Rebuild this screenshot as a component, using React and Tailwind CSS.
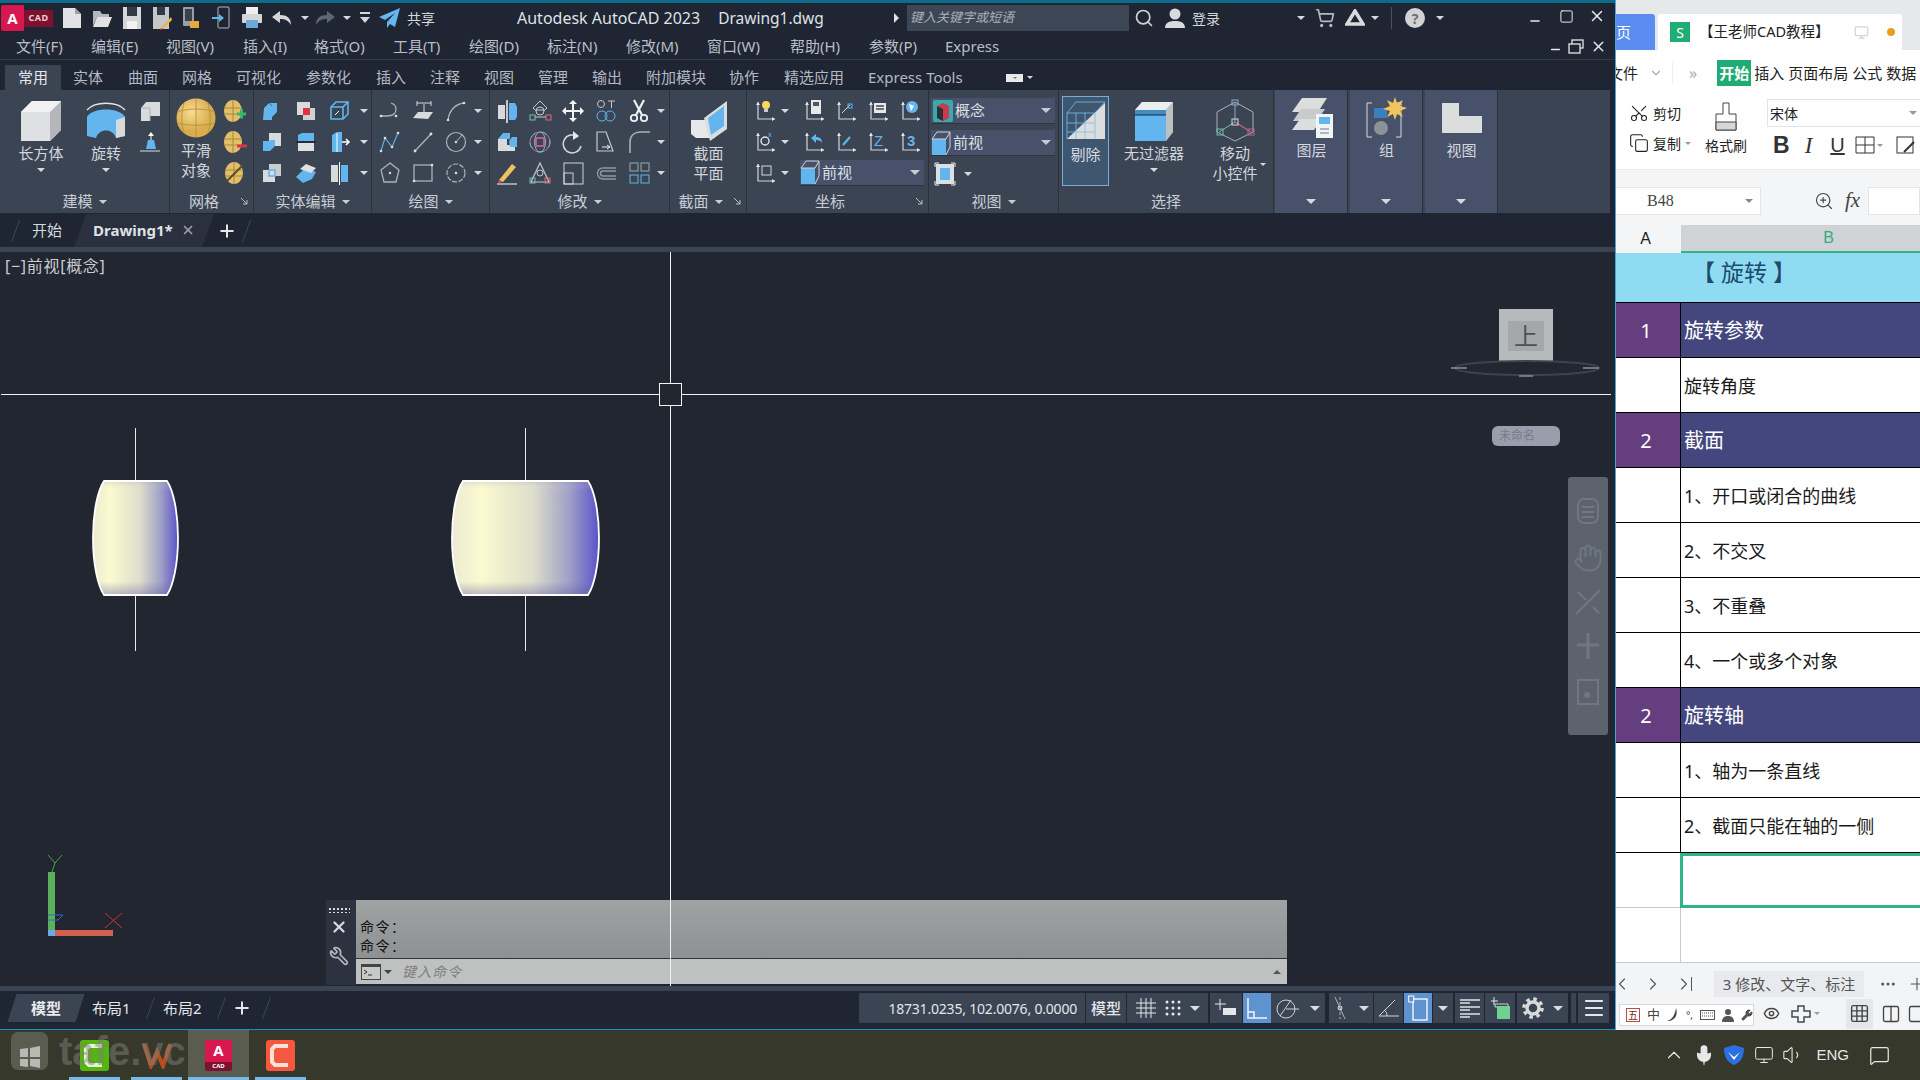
import React from "react";
import {
  X, Minus, Square, Search, ShoppingCart, Scissors, Copy, Wrench, Hand, Menu,
  ChevronLeft, ChevronRight, ChevronDown, ChevronUp, Plus, Mic, Volume1, MessageSquare, Monitor,
  ZoomIn, MoreHorizontal, Grid3x3, Columns2, Eye,
} from "lucide-react";

const L = "#d9dadb", B = "#62b5ee";

const Sv = ({ w = 24, h = 24, children, className = "" }) => (
  <svg width={w} height={h} viewBox={`0 0 ${w} ${h}`} className={"block shrink-0 " + className}>{children}</svg>
);
const Caret = ({ c = "#d5d8dc", s = 4 }) => (
  <svg width={s * 2} height={s} viewBox="0 0 8 4" className="block shrink-0"><path d="M0 0h8L4 4z" fill={c} /></svg>
);
const AxisBase = ({ children }) => (
  <Sv>
    <path d="M5 3v17h17" stroke="#cfd4da" strokeWidth="1.2" fill="none" />
    <path d="M3 6l2-3 2 3zM19 18l3 2-3 2z" fill="#e5e7ea" />
    {children}
  </Sv>
);

const icons = {
  uni: <Sv><path d="M4 9l5-5h8v9l-5 5v3H3z" fill={B} /><path d="M9 4l3 3" stroke="#2d6d9c" /></Sv>,
  sub: <Sv><rect x="3" y="3" width="13" height="13" fill={L} /><rect x="9" y="9" width="12" height="12" fill="#cfd0d2" /><rect x="9" y="9" width="7" height="7" fill="#d9363e" /></Sv>,
  press: <Sv><path d="M3 8l5-5h12v12l-5 5H3z" fill="none" stroke={B} strokeWidth="1.6" /><path d="M3 8h12v12M15 8l5-5" fill="none" stroke={B} strokeWidth="1.6" /><path d="M7 16l4-4" stroke="#fff" /></Sv>,
  inter: <Sv><rect x="9" y="3" width="12" height="13" fill={L} /><path d="M3 11h7v-1h5v6l-5 5H3z" fill={B} /></Sv>,
  slice: <Sv><path d="M4 5l4-2h12v8H4z" fill={B} /><path d="M4 13h16v8H4z" fill="#dfe0e1" /><path d="M2 12h20" stroke="#1f2532" strokeWidth="1.4" /></Sv>,
  thick: <Sv><path d="M4 5l5-3h5v20H4z" fill={B} /><path d="M9 3v19" stroke="#fff" /><path d="M14 12h7m-3-3l3 3-3 3" stroke="#fff" strokeWidth="1.6" fill="none" /></Sv>,
  sub2: <Sv><rect x="9" y="3" width="12" height="12" fill="#c9cbcd" /><rect x="3" y="9" width="12" height="12" fill={L} /><rect x="9" y="9" width="6" height="6" fill="none" stroke={B} strokeWidth="1.6" /></Sv>,
  fillet: <Sv><path d="M2 16l9-9 11 4-4 7-9 4z" fill={B} /><path d="M6 8l6-5 10 4-5 5z" fill="#dfe0e1" /></Sv>,
  sep: <Sv><rect x="3" y="4" width="7" height="17" fill={L} /><rect x="13" y="4" width="7" height="17" fill={B} /><path d="M11.5 1v23" stroke="#fff" /></Sv>,
  poly: <Sv><path d="M3 17h6c6 0 9-2 9-7 0-3-2-5-5-6" fill="none" stroke="#aab2bb" strokeWidth="1.3" /><circle cx="3" cy="17" r="1.3" fill="#ddd" /><circle cx="18" cy="17" r="1.3" fill="#ddd" /></Sv>,
  dim: <Sv><path d="M2 19l5-6h15l-5 7z" fill={L} /><path d="M6 4h14M6 2v5M20 2v5M13 5v10" stroke="#d4d8dc" fill="none" /></Sv>,
  arc: <Sv><path d="M4 21C5 12 11 5 20 4" fill="none" stroke="#aab2bb" strokeWidth="1.3" /><circle cx="4" cy="21" r="1.3" fill="#ddd" /><circle cx="20" cy="4" r="1.3" fill="#ddd" /></Sv>,
  pl: <Sv><path d="M3 21L7 8l7 9 6-14" fill="none" stroke={B} strokeWidth="1.1" /><circle cx="3" cy="21" r="1.3" fill="#ddd" /><circle cx="7" cy="8" r="1.3" fill="#ddd" /><circle cx="14" cy="17" r="1.3" fill="#ddd" /><circle cx="20" cy="3" r="1.3" fill="#ddd" /></Sv>,
  line: <Sv><path d="M4 21L20 4" stroke="#aab2bb" strokeWidth="1.3" /><circle cx="4" cy="21" r="1.4" fill="#ddd" /><circle cx="20" cy="4" r="1.4" fill="#ddd" /></Sv>,
  cir: <Sv><circle cx="12" cy="12" r="9.5" fill="none" stroke="#aab2bb" strokeWidth="1.2" /><circle cx="12" cy="12" r="1.3" fill="#ddd" /><path d="M12 12l6-7" stroke="#aab2bb" /></Sv>,
  pent: <Sv><path d="M12 2l9 7-3 12H6L3 9z" fill="none" stroke="#aab2bb" strokeWidth="1.3" /><circle cx="12" cy="12" r="1.2" fill="#ddd" /></Sv>,
  rect: <Sv><rect x="3" y="4" width="18" height="16" fill="none" stroke="#aab2bb" strokeWidth="1.3" /><circle cx="3" cy="20" r="1.3" fill="#ddd" /><circle cx="21" cy="4" r="1.3" fill="#ddd" /></Sv>,
  ell: <Sv><circle cx="12" cy="12" r="9" fill="none" stroke="#aab2bb" strokeWidth="1.2" strokeDasharray="5 1.5" /><circle cx="12" cy="12" r="1.3" fill="#ddd" /></Sv>,
  mirror: <Sv><path d="M3 6h7v14H3z" fill={L} /><path d="M14 4h6l2 4v10l-2 3h-6z" fill={B} /><path d="M12 1v23" stroke="#fff" strokeWidth="1.4" /></Sv>,
  net: <Sv><path d="M12 2l7 7-2 2H7L5 9z" fill="none" stroke="#c2c8ce" /><circle cx="12" cy="12" r="4" fill="none" stroke="#c2c8ce" /><rect x="2" y="16" width="5" height="5" fill="none" stroke="#6fc2a8" /><rect x="18" y="16" width="5" height="5" fill="none" stroke="#e26a7c" /><path d="M7 18h11" stroke="#c2c8ce" /></Sv>,
  move: <Sv><path d="M12 1l4 4h-3v6h6V8l4 4-4 4v-3h-6v6h3l-4 4-4-4h3v-6H5v3l-4-4 4-4v3h6V5H8z" fill="#f4f5f6" /></Sv>,
  copy: <Sv><circle cx="7" cy="5" r="3.5" fill="none" stroke="#c2c8ce" /><path d="M14 2h7M17.5 2v7" stroke="#c2c8ce" /><circle cx="8" cy="17" r="5" fill="none" stroke={B} /><circle cx="16" cy="17" r="5" fill="none" stroke={B} /></Sv>,
  cut: <Sv><path d="M7 1l8 15M17 1L9 16" stroke="#eef0f1" strokeWidth="2.2" /><circle cx="7" cy="19" r="3.2" fill="none" stroke="#eef0f1" strokeWidth="1.8" /><circle cx="17" cy="19" r="3.2" fill="none" stroke="#eef0f1" strokeWidth="1.8" /></Sv>,
  fillr: <Sv><path d="M3 9h9v6h8v6H3z" fill={L} /><path d="M3 9l5-6h7v6zM14 11l3-4h5v10h-7z" fill={B} /></Sv>,
  rot3d: <Sv><circle cx="12" cy="12" r="10" fill="none" stroke="#b977a8" /><circle cx="12" cy="12" r="10" fill="none" stroke="#6fc2a8" strokeDasharray="6 6" /><ellipse cx="12" cy="12" rx="5.5" ry="10" fill="none" stroke="#8fa7c9" /><rect x="8" y="8" width="8" height="8" fill="none" stroke="#d36aa0" strokeWidth="1.5" /></Sv>,
  rot: <Sv><path d="M17 7A9 9 0 1 0 20 16" fill="none" stroke="#d6d9dc" strokeWidth="1.5" /><path d="M12 1l6 5-6 4z" fill="#e5e7ea" /></Sv>,
  scale: <Sv><path d="M3 21V2h9l7 19z" fill="none" stroke="#c2c8ce" strokeWidth="1.2" /><path d="M8 17h8m-3-2l3 2-3 2" stroke="#eee" fill="none" /></Sv>,
  fil: <Sv><path d="M3 23V12C3 6 7 2 14 2h9" fill="none" stroke="#aab2bb" strokeWidth="1.6" /></Sv>,
  erase: <Sv><path d="M4 19L17 3l4 3L8 21z" fill="#ecc35f" /><path d="M4 19l4 2-5 1z" fill="#e4484e" /><path d="M2 23h20" stroke="#fff" /></Sv>,
  stretch: <Sv><path d="M12 2L21 21H3z" fill="none" stroke="#c2c8ce" strokeWidth="1.2" /><circle cx="12" cy="12" r="3" fill="none" stroke="#c2c8ce" /><rect x="2" y="17" width="5" height="5" fill="none" stroke="#6fc2a8" /><rect x="17" y="17" width="5" height="5" fill="none" stroke="#e26a7c" /></Sv>,
  sc2: <Sv><rect x="3" y="2" width="19" height="21" fill="none" stroke="#cdd2d7" /><rect x="3" y="12" width="9" height="11" fill="none" stroke="#cdd2d7" /></Sv>,
  off: <Sv><path d="M22 7H9a5 5 0 0 0 0 11h13M22 10H9a2.5 2.5 0 0 0 0 5h13" fill="none" stroke="#8f97a1" strokeWidth="1.4" /></Sv>,
  arr: <Sv><rect x="3" y="2" width="8" height="8" fill="none" stroke="#9aa" /><rect x="14" y="2" width="8" height="8" fill="none" stroke="#9aa" /><rect x="3" y="14" width="8" height="8" fill="none" stroke={B} /><rect x="14" y="14" width="8" height="8" fill="none" stroke={B} /></Sv>,
  ext: <Sv><path d="M3 9l5-6h14v14H12v5H3z" fill={L} /><path d="M3 9h9v13" fill="none" stroke="#aeb1b4" /></Sv>,
  push: <Sv><path d="M8 18l2-9h6l2 9z" fill={B} /><path d="M2 20h20" stroke="#e0e0e0" /><path d="M13 1l3 4h-6z" fill="#fff" /><path d="M13 4v5" stroke="#fff" /></Sv>,
  addF: <Sv><ellipse cx="10" cy="12" rx="9" ry="11" fill="#e3bf69" /><path d="M1 9h18M1 15h18M10 1v22" stroke="#a68a3e" /><path d="M14 15h9M18.500 10.500v9" stroke="#36b76c" strokeWidth="3" /></Sv>,
  remF: <Sv><ellipse cx="10" cy="12" rx="9" ry="11" fill="#e3bf69" /><path d="M1 9h18M1 15h18M10 1v22" stroke="#a68a3e" /><path d="M14 16h10" stroke="#d9363e" strokeWidth="3" /></Sv>,
  crF: <Sv><ellipse cx="11" cy="12" rx="9" ry="11" fill="#e3bf69" /><path d="M2 9h18M2 15h18M11 1v22" stroke="#a68a3e" /><path d="M4 20L20 4" stroke="#5b4b24" strokeWidth="2" /></Sv>,
  ucsL: <AxisBase><circle cx="13" cy="6" r="4" fill="#f6d75f" /><rect x="11" y="10" width="4" height="3" fill="#ccc" /></AxisBase>,
  ucsP: <AxisBase><rect x="9" y="1" width="10" height="14" fill="#e6e8ea" /><rect x="11" y="3" width="6" height="4" fill="#555" /></AxisBase>,
  ucsA: <AxisBase><path d="M8 14l8-8" stroke="#d7dade" /><rect x="14" y="5" width="4" height="4" fill="none" stroke={B} /></AxisBase>,
  ucsT: <AxisBase><rect x="8" y="4" width="12" height="10" fill="#e6e8ea" /><path d="M10 7h8M10 10h8" stroke="#445" strokeWidth="1.4" /></AxisBase>,
  ucsW: <AxisBase><circle cx="14" cy="8" r="6" fill={B} /><path d="M11 5l5 2-3 5z" fill="#fff" /></AxisBase>,
  ucsR: <AxisBase><circle cx="12" cy="11" r="4" fill="none" stroke="#e0e3e6" strokeWidth="1.4" /><text x="15" y="7" fontSize="7" fill={B}>x</text></AxisBase>,
  ucsB: <AxisBase><path d="M9 8l5-4v3c4 0 6 2 6 6-1-2-3-3-6-3v3z" fill={B} /></AxisBase>,
  ucsY: <AxisBase><path d="M9 15l7-8" stroke={B} strokeWidth="2" /></AxisBase>,
  ucsZ: <AxisBase><text x="8" y="16" fontSize="15" fontFamily="Liberation Sans" fill={B}>Z</text></AxisBase>,
  ucs3: <AxisBase><text x="9" y="16" fontSize="15" fontWeight="bold" fontFamily="Liberation Sans" fill={B}>3</text></AxisBase>,
  ucsN: <AxisBase><rect x="9" y="5" width="9" height="9" fill="none" stroke="#d5d9dd" /></AxisBase>,
};
const I = ({ n, w = 33 }) => <div style={{ width: w }} className="flex items-center justify-center shrink-0">{icons[n]}</div>;

const R = ({ children, className = "" }) => <div className={"flex items-center h-[31px] " + className}>{children}</div>;
const C = ({ w = 12 }) => <div style={{ width: w }} className="flex justify-center shrink-0"><Caret /></div>;

const Panel = ({ w, title, caret, launch, children, alt, shift }) => (
  <div style={{ width: w }} className={"shrink-0 flex flex-col border-r border-[#2a303c] " + (alt ? "bg-[#47516a]" : "")}>
    <div className="h-[100px] flex">{children}</div>
    <div className={"h-[23px] flex items-center justify-center gap-[6px] relative text-[15px] text-[#c9ced6] leading-none " + (shift ? "pr-[15px]" : "")}>
      {title}
      {caret && <Caret c="#c9ced6" />}
      {launch && <svg width="7" height="7" viewBox="0 0 7 7" className="absolute right-[5px] top-[8px]"><path d="M0 0l6 6M6 2v4H2" stroke="#b9bec6" fill="none" /></svg>}
    </div>
  </div>
);

const Big = ({ w, icon, lines, caret, className = "" }) => (
  <div style={{ width: w }} className={"shrink-0 flex flex-col items-center pt-[8px] text-[15px] leading-[20px] text-[#d3d7dd] " + className}>
    <div className="h-[45px] flex items-center">{icon}</div>
    {lines.map((l) => <div key={l} className="whitespace-nowrap">{l}</div>)}
    {caret && <div className="mt-[5px]"><Caret /></div>}
  </div>
);

const Dropdown = ({ w, icon, text, className = "" }) => (
  <div style={{ width: w }} className={"flex items-center bg-[#47516a] border-b border-[#2e3542] text-[15px] text-[#dde0e4] shrink-0 " + className}>
    {icon}<span className="ml-[2px]">{text}</span><span className="ml-auto mr-[4px]"><Caret s={5} c="#c8ccd2" /></span>
  </div>
);
const Cube = () => <Sv w={20} h={26}><rect x="1" y="9" width="14" height="16" fill={B} /><path d="M1 9l5-7h13v15l-4 8M1 9h14M15 9l4-7" fill="none" stroke="#cfd4da" /></Sv>;

const menu = [["文件(F)", 75], ["编辑(E)", 75], ["视图(V)", 77], ["插入(I)", 71], ["格式(O)", 79], ["工具(T)", 76], ["绘图(D)", 78], ["标注(N)", 79], ["修改(M)", 81], ["窗口(W)", 83], ["帮助(H)", 79], ["参数(P)", 76], ["Express", 70]];
const tabs = [["实体", 55], ["曲面", 54], ["网格", 54], ["可视化", 70], ["参数化", 70], ["插入", 54], ["注释", 54], ["视图", 54], ["管理", 54], ["输出", 54], ["附加模块", 83], ["协作", 55], ["精选应用", 84], ["Express Tools", 138]];

const Qat = ({ w, ml = 0, children }) => <div style={{ width: w, marginLeft: ml }} className="flex justify-center shrink-0">{children}</div>;

function TitleBar() {
  return (
    <div className="h-[30px] flex items-center relative text-[#d5d9de]">
      <div className="w-[23px] h-[26px] ml-[1px] bg-[#d8174f] rounded-l-[2px] flex items-center justify-center text-white font-bold text-[15px]">A</div>
      <div className="w-[29px] h-[17px] bg-[#7c1230] flex items-center justify-center text-[9px] font-bold text-[#f0cad4] tracking-[0.5px]">CAD</div>
      <Qat w={20} ml={9}><Sv w={20} h={22}><path d="M1 1h12l6 6v14H1z" fill="#e1e2e3" /><path d="M13 1v6h6z" fill="#9aa0a8" /></Sv></Qat>
      <Qat w={20} ml={10}><Sv w={20} h={20}><path d="M1 3h7l2 3h7v3H5L1 18z" fill="#b5b8bb" /><path d="M5 9h15l-4 10H1z" fill="#e1e2e3" /></Sv></Qat>
      <Qat w={20} ml={10}><Sv w={20} h={24}><path d="M1 1h18v22H1z" fill="#d5d6d8" /><rect x="5" y="1" width="10" height="9" fill="#323a48" /><rect x="5" y="15" width="10" height="8" fill="#f2f2f2" /></Sv></Qat>
      <Qat w={20} ml={10}><Sv w={20} h={24}><path d="M1 1h16v22H1z" fill="#c5c6c8" /><rect x="5" y="1" width="8" height="8" fill="#323a48" /><path d="M9 22l10-11 1 3-9 9z" fill="#ecb349" /><path d="M9 22l2 1-3 1z" fill="#d9363e" /></Sv></Qat>
      <Qat w={18} ml={10}><Sv w={18} h={24}><rect x="1" y="1" width="11" height="19" rx="1" fill="#9a9ea4" /><rect x="3" y="3" width="7" height="12" fill="#3a4250" /><path d="M8 15h9v7H8z" fill="#e7a93c" /></Sv></Qat>
      <Qat w={18} ml={12}><Sv w={18} h={24}><rect x="6" y="1" width="11" height="21" rx="1" fill="none" stroke="#b4b8bd" /><path d="M0 12h9" stroke={B} strokeWidth="2" /><path d="M7 8l5 4-5 4z" fill={B} /></Sv></Qat>
      <Qat w={20} ml={12}><Sv w={20} h={24}><rect x="4" y="1" width="12" height="7" fill="#eee" /><rect x="0" y="8" width="20" height="9" rx="1" fill="#d5d6d8" /><rect x="4" y="14" width="12" height="8" fill="#6da9d8" /></Sv></Qat>
      <Qat w={20} ml={10}><Sv w={20} h={16}><path d="M8 1L0 7l8 6V9c5 0 8 1 11 6 0-7-4-10-11-10z" fill="#d5d6d8" /></Sv></Qat>
      <Qat w={8} ml={9}><Caret /></Qat>
      <Qat w={20} ml={6}><Sv w={20} h={16}><path d="M12 1l8 6-8 6V9C7 9 4 10 1 15c0-7 4-10 11-10z" fill="#5e6672" /></Sv></Qat>
      <Qat w={8} ml={8}><Caret /></Qat>
      <Qat w={10} ml={9}><Sv w={10} h={12}><path d="M0 0h10v2H0z" fill="#d5d6d8" /><path d="M0 5h10L5 11z" fill="#d5d6d8" /></Sv></Qat>
      <Qat w={22} ml={9}><Sv w={22} h={20}><path d="M21 0L0 9l6 3 10-7-8 9v6l3-4 5 3z" fill="#65b6ee" /></Sv></Qat>
      <div className="ml-[6px] text-[14px] w-[110px] shrink-0">共享</div>
      <div className="whitespace-nowrap text-[#dfe2e6] w-[377px] shrink-0 flex items-baseline">
        <span className="text-[16px]">Autodesk AutoCAD 2023</span>
        <span className="ml-[18px] text-[15.5px]">Drawing1.dwg</span>
      </div>
      <div className="w-0 h-0 border-y-[5px] border-y-transparent border-l-[5px] border-l-[#e0e2e5] mr-[8px]" />
      <div className="w-[222px] h-[26px] bg-[#3d4654] flex items-center pl-[3px] text-[13px] italic text-[#a9afb8] shrink-0">键入关键字或短语</div>
      <Search size={20} className="ml-[5px] text-[#cfd3d8]" />
      <Sv w={22} h={20} className="ml-[10px]"><circle cx="11" cy="6" r="5.500" fill="#d9dadb" /><path d="M1 20c0-6 5-7 10-7s10 1 10 7z" fill="#d9dadb" /></Sv>
      <div className="ml-[6px] text-[14px] w-[30px]">登录</div>
      <div className="ml-[75px]"><Caret /></div>
      <ShoppingCart size={20} className="ml-[10px] text-[#b5b9be]" />
      <Sv w={20} h={18} className="ml-[10px]"><path d="M10 2L2 15h16z" fill="none" stroke="#d9dadb" strokeWidth="3.500" /></Sv>
      <div className="ml-[6px]"><Caret /></div>
      <div className="ml-[12px] w-px h-[22px] bg-[#4a5261]" />
      <div className="ml-[13px] w-[20px] h-[20px] rounded-full bg-[#d0d2d4] flex items-center justify-center text-[#6b7078] text-[14px] font-bold">?</div>
      <div className="ml-[11px]"><Caret /></div>
      <Minus size={14} strokeWidth={2.5} className="ml-[84px] mt-[6px] text-[#e8e9eb]" />
      <Square size={15} strokeWidth={1.6} className="ml-[17px] -mt-[4px] text-[#e8e9eb]" />
      <X size={18} strokeWidth={2} className="ml-[14px] -mt-[4px] text-[#e8e9eb]" />
    </div>
  );
}

function MenuBar() {
  return (
    <div className="h-[27px] flex items-center pl-[16px] border-b border-[#343b48] relative text-[15px] text-[#b9bfc8]">
      {menu.map(([t, w]) => <div key={t} style={{ width: w }} className="shrink-0 whitespace-nowrap">{t}</div>)}
      <div className="ml-auto mr-[8px] flex items-center gap-[6px] text-[#e8e9eb]">
        <Minus size={13} strokeWidth={3} className="mt-[6px]" />
        <Sv w={16} h={15}><rect x="4" y="1" width="11" height="8" fill="none" stroke="#e8e9eb" strokeWidth="1.300" /><rect x="1" y="5" width="11" height="9" fill="#1f2532" stroke="#e8e9eb" strokeWidth="1.300" /></Sv>
        <X size={17} strokeWidth={2} />
      </div>
    </div>
  );
}

function RibbonTabs() {
  return (
    <div className="h-[30px] flex items-end pl-[5px] text-[15px] text-[#b4bac4]">
      <div className="w-[56px] h-[25px] bg-[#3b4453] text-[#e6e9ec] flex items-center justify-center shrink-0">常用</div>
      <div className="w-[12px] shrink-0" />
      {tabs.map(([t, w]) => <div key={t} style={{ width: w }} className="h-[25px] flex items-center shrink-0 whitespace-nowrap">{t}</div>)}
      <div className="h-[25px] flex items-center gap-[4px]">
        <div className="w-[17px] h-[8px] bg-[#e9e9e9] flex items-center justify-center"><Caret c="#777" s={2} /></div>
        <Caret s={3} />
      </div>
    </div>
  );
}

const Tri = ({ names, pad = 0, step = 33, car = 12, gap = 0 }) => (
  <div className="flex flex-col pt-[5px]" style={{ marginLeft: pad }}>
    {names.map((r, i) => (
      <R key={i}>{r.map((n) => <I key={n} n={n} w={step} />)}{car > 0 && <div style={{ marginLeft: gap }}><C w={car} /></div>}</R>
    ))}
  </div>
);

function Ribbon() {
  return (
    <div className="h-[123px] pr-[5px] flex">
      <div className="flex-1 flex bg-[#3b4453]">
        <Panel w={170} title="建模" caret>
          <Big w={50} className="ml-[16px]" lines={["长方体"]} caret icon={<Sv w={42} h={42}><path d="M1 12L12 1h29v29L30 41H1z" fill="#dfe0e1" /><path d="M30 12L41 1v29L30 41z" fill="#b4b6b9" /><path d="M1 12L12 1h29L30 12z" fill="#f2f2f2" /></Sv>} />
          <Big w={50} className="ml-[15px]" lines={["旋转"]} caret icon={<Sv w={42} h={38}><path d="M2 15c5-10 33-10 38 0v19l-9 2c-3-10-17-10-20 0l-9-2z" fill={B} /><path d="M31 18l9-3v19l-9 2z" fill="#d8d9da" /><path d="M2 8C10-1 32-1 40 8" fill="none" stroke="#e3e4e5" strokeWidth="1.500" /></Sv>} />
          <div className="ml-[4px] flex flex-col pt-[9px] gap-[8px]">
            <I n="ext" w={30} />
            <I n="push" w={30} />
          </div>
        </Panel>
        <Panel w={84} title="网格" launch shift>
          <Big w={44} className="ml-[4px] !pt-[5px]" lines={["平滑", "对象"]} icon={
            <Sv w={40} h={40}><defs><radialGradient id="sp" cx="40%" cy="35%"><stop offset="0" stopColor="#f8dc91" /><stop offset="1" stopColor="#d9ac4c" /></radialGradient></defs><ellipse cx="20" cy="20" rx="19.500" ry="19.500" fill="url(#sp)" /><path d="M1 14c10-4 28-4 38 0M1 25c10 3 28 3 38 0M20 1v38M8 5c-3 10-3 22 0 30M32 5c3 10 3 22 0 30" stroke="#ad8b3f" fill="none" strokeWidth="0.800" /></Sv>} />
          <div className="ml-[2px]"><Tri names={[["addF"], ["remF"], ["crF"]]} step={30} car={0} /></div>
        </Panel>
        <Panel w={118} title="实体编辑" caret>
          <Tri names={[["uni", "sub", "press"], ["inter", "slice", "thick"], ["sub2", "fillet", "sep"]]} pad={1} step={34} car={11} gap={1} />
        </Panel>
        <Panel w={118} title="绘图" caret>
          <Tri names={[["poly", "dim", "arc"], ["pl", "line", "cir"], ["pent", "rect", "ell"]]} pad={1} step={33} car={12} />
        </Panel>
        <Panel w={180} title="修改" caret>
          <Tri names={[["mirror", "net", "move", "copy", "cut"], ["fillr", "rot3d", "rot", "scale", "fil"], ["erase", "stretch", "sc2", "off", "arr"]]} step={33} car={12} gap={0} />
        </Panel>
        <Panel w={77} title="截面" caret launch shift>
          <Big w={77} lines={["截面", "平面"]} icon={<Sv w={38} h={42}><path d="M1 20h24v18H6l-5-4z" fill="#e7e8e9" /><path d="M14 18L37 1v28L20 41z" fill="#dbdcdd" /><path d="M18 18L34 6v20L21 35z" fill={B} /></Sv>} />
        </Panel>
        <Panel w={182} title="坐标" launch shift>
          <div className="flex flex-col pt-[5px] pl-[5px]">
            <R><I n="ucsL" w={26} /><C w={14} /><div className="w-[6px]" /><I n="ucsP" w={32} /><I n="ucsA" w={32} /><I n="ucsT" w={32} /><I n="ucsW" w={32} /></R>
            <R><I n="ucsR" w={26} /><C w={14} /><div className="w-[6px]" /><I n="ucsB" w={32} /><I n="ucsY" w={32} /><I n="ucsZ" w={32} /><I n="ucs3" w={32} /></R>
            <R><I n="ucsN" w={26} /><C w={14} /><Dropdown w={124} className="ml-[8px] h-[26px]" icon={<Cube />} text="前视" /></R>
          </div>
        </Panel>
        <Panel w={130} title="视图" caret>
          <div className="flex flex-col pt-[8px] pl-[2px]">
            <Dropdown w={124} className="h-[26px] mb-[6px]" text="概念" icon={<Sv w={20} h={22} className="ml-[2px]"><rect width="20" height="22" rx="2" fill="#39a9a9" /><path d="M4 6l6-3 6 3v12l-6 3-6-3z" fill="#c43c4e" /><path d="M4 6l6 3v12l-6-3z" fill="#2b2f38" /></Sv>} />
            <Dropdown w={124} className="h-[26px]" text="前视" icon={<Cube />} />
            <div className="flex items-center mt-[5px] h-[26px]">
              <Sv w={22} h={24} className="ml-[3px]"><rect x="2" y="2" width="18" height="20" fill="#dcdfe2" /><rect x="6" y="6" width="10" height="12" fill={B} /><path d="M1 5V1h4M17 1h4v4M1 19v4h4M17 23h4v-4" stroke="#eee" fill="none" /></Sv>
              <div className="ml-[8px]"><Caret /></div>
            </div>
          </div>
        </Panel>
        <Panel w={215} title="选择">
          <div className="ml-[3px] mt-[6px] w-[47px] h-[90px] mb-[-1px] bg-[#3f5670] border border-[#74add6] flex flex-col items-center pt-[2px] text-[15px] text-[#d8dce1] shrink-0">
            <Sv w={40} h={42}><path d="M1 40l38-36v36z" fill="#dcdddd" /><path d="M1 14L10 3h29M1 14h28v26M29 14L39 3M1 14v26M10 14v26M19 14v26M1 24h28M1 33h28" stroke="#79c0e8" fill="none" strokeWidth="0.800" /></Sv>
            <div className="mt-[2px]">剔除</div>
          </div>
          <Big w={70} className="ml-[10px]" lines={["无过滤器"]} caret icon={<Sv w={40} h={42}><path d="M1 10L8 2h31v30l-7 9H1z" fill={B} /><path d="M1 10L8 2h31l-7 8z" fill="#eceded" /><path d="M32 10l7-8v30l-7 9z" fill="#bdbfc1" /><path d="M1 10h31v5H1z" fill="#3e8dc6" /><path d="M1 15h31" stroke="#1f2532" /></Sv>} />
          <div className="relative">
            <Big w={70} className="ml-[11px]" lines={["移动", "小控件"]} icon={<Sv w={40} h={44}><path d="M20 3L38 13v20L20 42 2 33V13z" fill="none" stroke="#aab0b8" /><path d="M20 3v20" stroke="#8fa7c9" /><path d="M20 23L4 33" stroke="#6fc2a8" /><path d="M20 23l16 10" stroke="#c26488" strokeWidth="1.400" /><rect x="17" y="20" width="6" height="6" fill="none" stroke="#d5d9dd" /><rect x="17" y="1" width="6" height="5" fill="none" stroke="#8fa7c9" /><rect x="2" y="30" width="6" height="6" fill="none" stroke="#6fc2a8" /><rect x="33" y="30" width="6" height="6" fill="none" stroke="#c26488" /></Sv>} />
            <div className="absolute right-[4px] top-[73px]"><Caret s={3} /></div>
          </div>
        </Panel>
        <div className="w-[1px] shrink-0" />
        <Panel w={73} alt title={<Caret s={5} />}>
          <Big w={73} className="!pt-[5px]" lines={["图层"]} icon={<Sv w={42} h={42}><path d="M11 1h25l-9 14H1z" fill="#dcdddd" /><path d="M10 12h24l-8 12H2z" fill="#c9cacc" /><path d="M9 22h22l-8 11H1z" fill="#dcdddd" /><rect x="25" y="17" width="17" height="24" fill="#f2f3f4" /><rect x="28" y="20" width="11" height="7" fill={B} /><path d="M29 32h9M29 36h9" stroke="#778" /></Sv>} />
        </Panel>
        <div className="w-[2px] shrink-0" />
        <Panel w={73} alt title={<Caret s={5} />}>
          <Big w={73} className="!pt-[5px]" lines={["组"]} icon={<Sv w={42} h={42}><path d="M6 6H1v34h5M30 6h5v34h-5" stroke="#d9dadb" fill="none" /><rect x="8" y="11" width="13" height="10" fill="#3c7fbe" /><circle cx="15" cy="31" r="7" fill="#8d9199" /><path d="M29 0l2 6 6-3-3 6 7 2-7 3 3 6-6-3-2 6-2-6-6 3 3-6-7-2 7-3-3-6 6 3z" fill="#f3c45a" /></Sv>} />
        </Panel>
        <div className="w-[2px] shrink-0" />
        <Panel w={73} alt title={<Caret s={5} />}>
          <Big w={73} className="!pt-[5px]" lines={["视图"]} icon={<Sv w={42} h={32}><path d="M1 1h17v13h23v17H1z" fill="#dcdddd" /></Sv>} />
        </Panel>
      </div>
    </div>
  );
}

const Skew = () => <div className="w-px h-[22px] bg-[#3e4656] -skew-x-[20deg] shrink-0" />;

function DocTabs() {
  return (
    <div className="h-[34px] flex items-center pl-[15px] pt-[1px] text-[#d5d9de]">
      <Skew />
      <div className="w-[64px] pl-[16px] text-[15px]">开始</div>
      <div className="h-[33px] w-[128px] bg-[#2a303d] -skew-x-[20deg] flex items-center justify-center">
        <div className="skew-x-[20deg] flex items-center gap-[8px] text-[15px] font-bold text-[#dfe2e6]">Drawing1*<X size={14} strokeWidth={3} className="text-[#9aa0a9]" /></div>
      </div>
      <Plus size={20} strokeWidth={2.4} className="ml-[9px] text-[#e8e9eb]" />
      <div className="ml-[9px]"><Skew /></div>
    </div>
  );
}

function Solid({ id, x, w }) {
  const y0 = 481, y1 = 595, r = x + w, inset = 11, m = (y0 + y1) / 2;
  const d = `M${x + inset} ${y0} H${r - inset} C${r - 5} ${y0 + 9} ${r} ${y0 + 30} ${r} ${m} C${r} ${y1 - 30} ${r - 5} ${y1 - 9} ${r - inset} ${y1} H${x + inset} C${x + 5} ${y1 - 9} ${x} ${y1 - 30} ${x} ${m} C${x} ${y0 + 30} ${x + 5} ${y0 + 9} ${x + inset} ${y0}Z`;
  return (
    <g>
      <defs>
        <linearGradient id={id + "h"} x1="0" x2="1" y1="0" y2="0">
          <stop offset="0" stopColor="#ecebd2" /><stop offset="0.2" stopColor="#fbfad0" /><stop offset="0.55" stopColor="#dedecb" />
          <stop offset="0.8" stopColor="#9f9fc6" /><stop offset="1" stopColor="#5a53c9" />
        </linearGradient>
        <linearGradient id={id + "v"} x1="0" x2="0" y1="0" y2="1">
          <stop offset="0" stopColor="#8e8ea0" stopOpacity="0.25" /><stop offset="0.08" stopColor="#fff" stopOpacity="0" /><stop offset="0.88" stopColor="#5a55a0" stopOpacity="0" /><stop offset="1" stopColor="#5a55a0" stopOpacity="0.4" />
        </linearGradient>
      </defs>
      <path d={d} fill={`url(#${id}h)`} />
      <path d={d} fill={`url(#${id}v)`} stroke="#fff" strokeWidth="1.800" />
    </g>
  );
}

function Canvas() {
  return (
    <div className="flex-1 relative bg-[#212631] overflow-hidden">
      <svg width="1615" height="733" viewBox="0 252 1615 733" className="absolute left-0 top-0">
        <path d="M135.500 428v53M135.500 595v56M525.500 428v53M525.500 595v56" stroke="#e8e9ea" strokeWidth="1" />
        <Solid id="a" x={93} w={85} />
        <Solid id="b" x={452} w={147} />
      </svg>

      <div className="absolute left-[5px] top-[5px] text-[16px] leading-[18px] tracking-[0.7px] text-[#c9ccd1]">[−]前视[概念]</div>

      <div className="absolute left-[1499px] top-[57px] w-[54px] h-[53px] bg-[#b7baba] flex items-center justify-center">
        <div className="w-[36px] h-[30px] bg-[#a5a8a9] flex items-center justify-center text-[24px] text-[#4c5158] leading-none">上</div>
      </div>
      <svg width="160" height="24" viewBox="0 0 160 24" className="absolute left-[1445px] top-[104px]">
        <ellipse cx="82" cy="12" rx="72" ry="7" fill="none" stroke="#3c434f" strokeWidth="2" />
        <path d="M6 12h16M138 12h16M74 20h14" stroke="#8b9097" strokeWidth="1.500" />
      </svg>
      <div className="absolute left-[1492px] top-[174px] w-[68px] h-[20px] rounded-[6px] bg-[#9a9eac] flex items-center pl-[7px] text-[12px] text-[#777b88]">未命名</div>

      <div className="absolute left-[1568px] top-[225px] w-[40px] h-[258px] rounded-[3px] bg-[#5c636c] flex flex-col items-center pt-[20px] text-[#6f767f] gap-[14px]">
        <Sv w={26} h={32}><rect x="3" y="2" width="20" height="24" rx="6" fill="none" stroke="#70777f" strokeWidth="2" /><path d="M7 10h12M7 15h12M7 20h12" stroke="#70777f" strokeWidth="2" /></Sv>
        <Hand size={30} strokeWidth={1.6} />
        <Sv w={30} h={30}><path d="M3 27L27 3M5 5l8 8M20 20l6 6" stroke="#70777f" strokeWidth="2" /></Sv>
        <Sv w={28} h={30}><path d="M14 2v26M3 14h22" stroke="#70777f" strokeWidth="3" /></Sv>
        <Sv w={26} h={34}><rect x="3" y="5" width="20" height="24" fill="none" stroke="#70777f" strokeWidth="2" /><circle cx="12" cy="20" r="3" fill="#70777f" /></Sv>
      </div>

      <svg width="100" height="90" viewBox="0 0 100 90" className="absolute left-[40px] top-[603px]">
        <path d="M8 17h7v64H8z" fill="#5cb05c" />
        <path d="M11 75h62v6H11z" fill="#d2604f" />
        <rect x="8" y="75" width="7" height="6" fill="#6aa8e8" />
        <path d="M8 0l7 8 7-8M15 8l-3 9" stroke="#4fa04f" fill="none" />
        <path d="M65 58l17 15M82 58L65 73" stroke="#c8383e" />
        <path d="M8 60h15l-5 5H8" stroke="#2a70c8" fill="none" />
      </svg>

      <div className="absolute left-[326px] top-[648px] w-[961px] h-[85px] flex">
        <div className="w-[30px] bg-[#2c3240] flex flex-col items-center pt-[7px] pr-[4px]">
          <div className="w-[22px] h-[6px] bg-[radial-gradient(#d8d9da_1px,transparent_1.3px)] bg-[length:4px_4px]" />
          <X size={18} strokeWidth={3} className="mt-[5px] text-[#d5d8dc]" />
          <Wrench size={20} className="mt-[10px] text-[#b5b9be] -scale-x-100" />
        </div>
        <div className="flex-1 flex flex-col">
          <div className="h-[59px] bg-gradient-to-b from-[#a0a3a3] to-[#8e9191] border-b border-[#333] flex flex-col justify-end pb-[3px] pl-[4px] text-[14px] tracking-[1.5px] leading-[19px] text-[#111]">
            <div>命令：</div>
            <div>命令：</div>
          </div>
          <div className="flex-1 bg-[#bfc1c0] flex items-center pl-[5px] text-[14px] italic text-[#7d7f80] mb-[1px]">
            <Sv w={20} h={16}><rect x="0.500" y="0.500" width="19" height="15" fill="#c8caca" stroke="#444" /><rect x="0" y="0" width="20" height="3" fill="#444" /><path d="M3 6l3 2-3 2M7 11h4" stroke="#333" fill="none" /></Sv>
            <div className="ml-[3px]"><Caret c="#444" /></div>
            <span className="ml-[10px] tracking-[1px]">键入命令</span>
            <span className="ml-auto mr-[6px] rotate-180"><Caret c="#555" /></span>
          </div>
        </div>
      </div>

      <div className="absolute left-[1px] top-[142px] w-[1610px] h-px bg-[#f2f3f4]" />
      <div className="absolute left-[670px] top-0 w-px h-full bg-[#f2f3f4]" />
      <div className="absolute left-[659px] top-[131px] w-[23px] h-[23px] border border-[#f2f3f4] bg-[#212631]" />
    </div>
  );
}

const SG = ({ w, children, active, className = "" }) => (
  <div style={{ width: w }} className={"h-[30px] shrink-0 flex items-center justify-center gap-[8px] " + (active ? "bg-[#5f93cf] " : "bg-[#3b4453] ") + className}>{children}</div>
);

function StatusBar() {
  return (
    <>
      <div className="h-[5px] bg-[#3b4453]" />
      <div className="h-[39px] flex items-start pt-[2px] text-[#e3e6ea] border-b border-[#1a8fc4]">
        <div className="flex items-center h-[30px] text-[15px] pl-[12px]">
          <div className="w-[68px] h-[28px] bg-[#3b4453] -skew-x-[18deg] flex items-center justify-center"><span className="skew-x-[18deg] font-bold text-[#e8eaed]">模型</span></div>
          <div className="w-[70px] pl-[12px]">布局1</div>
          <Skew />
          <div className="w-[70px] pl-[12px]">布局2</div>
          <Skew />
          <Plus size={20} strokeWidth={2.4} className="ml-[10px]" />
          <div className="ml-[14px]"><Skew /></div>
        </div>
        <div className="flex-1" />
        <div className="flex items-center gap-[1px] pr-[6px]">
          <SG w={226} className="!justify-end pr-[8px] text-[14px] tracking-[-0.2px] whitespace-nowrap">18731.0235, 102.0076, 0.0000</SG>
          <SG w={40} className="text-[15px] font-medium">模型</SG>
          <SG w={81}>
            <Sv w={20} h={20}><path d="M5 0v20M10 0v20M15 0v20M0 5h20M0 10h20M0 15h20" stroke="#e3e6ea" /></Sv>
            <Sv w={18} h={18}><path d="M3 3h0M9 3h0M15 3h0M3 9h0M9 9h0M15 9h0M3 15h0M9 15h0M15 15h0" stroke="#e3e6ea" strokeWidth="3" strokeLinecap="round" /></Sv>
            <Caret s={5} c="#d8dbdf" />
          </SG>
          <SG w={32} className="ml-[1px]"><Sv w={22} h={20}><path d="M5 1v11M0 6h11" stroke="#e3e6ea" /><rect x="8" y="10" width="13" height="7" fill="#e3e6ea" /></Sv></SG>
          <SG w={28} active><Sv w={22} h={22}><path d="M2 1v20h19M2 15h6v6" stroke="#f3f4f6" strokeWidth="1.500" fill="none" /></Sv></SG>
          <SG w={54} className="!gap-[10px] -translate-x-[1px]"><Sv w={24} h={22}><circle cx="10" cy="12" r="9" fill="none" stroke="#cfd3d8" /><path d="M4 19L15 3M10 12h13" stroke="#cfd3d8" /></Sv><Caret s={5} c="#d8dbdf" /></SG>
          <SG w={44} className="ml-[2px] !gap-[12px]"><Sv w={14} h={24}><path d="M2 1l10 22" stroke="#aeb3ba" /><path d="M7 1v22" stroke="#aeb3ba" strokeDasharray="3 2" /><circle cx="7" cy="12" r="2" fill="none" stroke="#e3e6ea" /></Sv><Caret s={5} c="#d8dbdf" /></SG>
          <SG w={29}><Sv w={22} h={20}><path d="M1 18h20M1 18L17 2M9 18c0-3-1-5-3-6" stroke="#cfd3d8" fill="none" /></Sv></SG>
          <SG w={28} active><Sv w={20} h={26}><rect x="5" y="4" width="14" height="21" fill="none" stroke="#fff" strokeWidth="1.300" /><rect x="0.700" y="1" width="5" height="6" fill="#5f93cf" stroke="#fff" /></Sv></SG>
          <SG w={20}><Caret s={5} c="#d8dbdf" /></SG>
          <SG w={29} className="ml-[1px]"><Sv w={22} h={20}><path d="M1 2h20M1 5h10M1 9h20M1 12h10M1 16h20M1 19h10" stroke="#dfe2e5" strokeWidth="1.400" /></Sv></SG>
          <SG w={30}><Sv w={20} h={24}><path d="M1 5h7M4 1v8" stroke="#e3e6ea" /><path d="M5 8h13v3H5z" fill="none" stroke="#cfd3d8" /><rect x="7" y="10" width="13" height="13" fill="#6fd08f" /></Sv></SG>
          <SG w={51} className="ml-[1px] !gap-[9px]">
            <Sv w={22} h={22}><circle cx="11" cy="11" r="9" fill="none" stroke="#d9dadb" strokeWidth="3.500" strokeDasharray="3.500 3.570" /><circle cx="11" cy="11" r="6" fill="none" stroke="#d9dadb" strokeWidth="3.500" /></Sv>
            <Caret s={5} c="#d8dbdf" />
          </SG>
          <div className="w-[5px] h-[30px] bg-[#3b4453] ml-[2px]" />
          <SG w={31} className="ml-[1px]"><Menu size={24} strokeWidth={2.2} /></SG>
        </div>
      </div>
    </>
  );
}

const sheet = [
  { k: "h", a: "1", t: "旋转参数" }, { t: "旋转角度" }, { k: "h", a: "2", t: "截面" },
  { t: "1、开口或闭合的曲线" }, { t: "2、不交叉" }, { t: "3、不重叠" }, { t: "4、一个或多个对象" },
  { k: "h", a: "2", t: "旋转轴" }, { t: "1、轴为一条直线" }, { t: "2、截面只能在轴的一侧" },
];

function Wps() {
  return (
    <div className="flex-1 min-w-0 bg-white flex flex-col border-l border-[#4aa4e0] overflow-hidden text-[#222]">
      <div className="h-[50px] bg-[#e7e8ea] flex items-end shrink-0">
        <div className="w-[39px] h-[36px] bg-[#5b8df0] rounded-tr-[3px] flex items-center text-[15px] text-white">页</div>
        <div className="ml-[3px] w-[244px] h-[36px] bg-white rounded-t-[3px] flex items-center pl-[12px] text-[14.500px] whitespace-nowrap">
          <div className="w-[20px] h-[20px] bg-[#1fae76] flex items-center justify-center text-white text-[14px] shrink-0">S</div>
          <span className="ml-[9px]">【王老师CAD教程】</span>
          <Monitor size={15} className="ml-[24px] text-[#d2d5d8] shrink-0" />
          <div className="ml-[18px] w-[8px] h-[8px] rounded-full bg-[#e8a11c] shrink-0" />
        </div>
      </div>
      <div className="h-[38px] pt-[8px] flex items-center text-[15px] whitespace-nowrap shrink-0">
        <div className="w-[23px] -ml-[1px] shrink-0 flex justify-end overflow-hidden"><span className="shrink-0">文件</span></div>
        <ChevronDown size={14} className="ml-[11px] text-[#aaa] shrink-0" />
        <div className="ml-[9px] w-px h-[22px] bg-[#eee]" />
        <span className="ml-[16px] text-[#aaa] text-[16px]">»</span>
        <div className="ml-[20px] w-[34px] h-[26px] bg-[#1fac74] text-white font-bold flex items-center justify-center shrink-0">开始</div>
        <span className="ml-[3px]">插入</span><span className="ml-[4px]">页面布局</span><span className="ml-[4px]">公式</span><span className="ml-[4px]">数据</span>
      </div>
      <div className="h-[82px] flex shrink-0 border-b border-[#e9ebee] bg-white">
        <div className="w-[78px] pl-[13px] pt-[13px] text-[14px] shrink-0">
          <div className="flex items-center h-[24px] gap-[4px]"><Scissors size={20} strokeWidth={1.3} className="-rotate-90 shrink-0" />剪切</div>
          <div className="flex items-center h-[24px] gap-[4px] mt-[6px]"><Copy size={20} strokeWidth={1.3} className="shrink-0" />复制<Caret c="#999" s={3} /></div>
        </div>
        <div className="w-[70px] shrink-0 flex flex-col items-center pt-[14px] pr-[6px] text-[14px] leading-[20px]">
          <Sv w={24} h={30}><path d="M9 1h6v11h7v16H2V12h7z" fill="#fff" stroke="#444" /><path d="M2 20h20v8H2z" fill="#d5d8da" stroke="#444" /></Sv>
          <div className="mt-[4px] whitespace-nowrap">格式刷</div>
        </div>
        <div className="flex-1 min-w-0 pt-[11px] pl-[3px]">
          <div className="h-[28px] border border-[#e2e4e7] flex items-center pl-[2px] text-[14px] w-[160px]">宋体<span className="ml-auto mr-[9px]"><Caret c="#999" /></span></div>
          <div className="flex items-center mt-[5px] pl-[6px] text-[#333] h-[26px]">
            <span className="font-bold text-[23px] leading-none font-['Liberation_Sans',sans-serif]">B</span>
            <span className="ml-[15px] italic text-[23px] leading-none font-['Liberation_Serif',serif]">I</span>
            <span className="ml-[18px] underline text-[20px] leading-none font-['Liberation_Sans',sans-serif]">U</span>
            <Sv w={20} h={18} className="ml-[10px]"><path d="M1 1h18v16H1zM10 1v16M1 9h18" fill="none" stroke="#333" /></Sv>
            <div className="ml-[2px]"><Caret c="#999" s={3} /></div>
            <Sv w={20} h={18} className="ml-[13px]"><rect x="1" y="1" width="16" height="16" fill="none" stroke="#333" /><path d="M8 16L18 6" stroke="#333" strokeWidth="2" /></Sv>
          </div>
        </div>
      </div>
      <div className="h-[55px] pt-[6px] bg-[#f3f5f7] flex items-center shrink-0">
        <div className="w-[145px] h-[28px] bg-white border-y border-r border-[#e2e4e7] flex items-center pl-[31px] text-[16px] font-['Liberation_Serif',serif] text-[#444] shrink-0">B48<span className="ml-auto mr-[7px]"><Caret c="#888" /></span></div>
        <ZoomIn size={20} strokeWidth={1.4} className="ml-[53px] text-[#444] shrink-0" />
        <span className="ml-[11px] italic text-[21px] font-['Liberation_Serif',serif] text-[#444] shrink-0">fx</span>
        <div className="ml-[8px] flex-1 h-[28px] bg-white border border-[#e2e4e7]" />
      </div>
      <div className="h-[28px] flex shrink-0 bg-[#f3f5f7]">
        <div className="w-[65px] pr-[6px] flex items-center justify-center text-[16px] font-['Liberation_Sans',sans-serif]">A</div>
        <div className="flex-1 pl-[56px] bg-[#cfd3d6] border-b-2 border-[#2fb48a] flex items-center justify-center text-[16px] text-[#37ab82] font-['Liberation_Sans',sans-serif]">B</div>
      </div>
      <div className="h-[50px] pb-[10px] bg-[#8fdcf2] border-b border-black flex items-center pl-[76px] text-[23px] text-[#1c4a70] shrink-0 whitespace-pre">【 旋转 】</div>
      {sheet.map((r, i) => (
        <div key={i} className="h-[55px] flex shrink-0 border-b border-black">
          <div className={"w-[65px] pr-[4px] pt-[2px] border-r border-black flex items-center justify-center text-[20px] " + (r.k ? "bg-[#643e7e] text-white" : "bg-white")}>{r.a}</div>
          <div className={"flex-1 flex items-center pl-[3px] pt-[2px] whitespace-nowrap " + (r.k ? "bg-[#44477e] text-white text-[20px]" : "bg-white text-[#1a1a1a] text-[18px]")}>{r.t}</div>
        </div>
      ))}
      <div className="h-[55px] flex shrink-0">
        <div className="w-[65px] border-r border-b border-[#c9c9c9]" />
        <div className="flex-1 border-y-[3px] border-l-[3px] border-[#2fb48a] -ml-px" />
      </div>
      <div className="h-[55px] flex shrink-0 border-b border-[#c9c9c9]">
        <div className="w-[65px] border-r border-[#c9c9c9]" />
      </div>
      <div className="h-[34px] pt-[8px] bg-[#f3f4f6] flex items-center shrink-0 text-[#555] whitespace-nowrap">
        <ChevronLeft size={20} strokeWidth={1.3} className="-ml-[4px] shrink-0" />
        <ChevronRight size={20} strokeWidth={1.3} className="ml-[11px] shrink-0" />
        <ChevronRight size={20} strokeWidth={1.3} className="ml-[11px] shrink-0" />
        <div className="w-px h-[14px] bg-[#555] -ml-[3px] shrink-0" />
        <div className="ml-[22px] w-[150px] h-[27px] bg-[#e8eaed] flex items-center justify-center text-[15px] shrink-0">3 修改、文字、标注</div>
        <MoreHorizontal size={18} className="ml-[15px] shrink-0" />
        <Plus size={20} strokeWidth={1.3} className="ml-[10px] shrink-0" />
      </div>
      <div className="flex-1 bg-[#f3f4f6] flex items-center text-[#444] relative">
        <div className="ml-[3px] h-[22px] w-[146px] bg-white border border-[#d8d8d8] flex items-center pl-[6px] gap-[7px] text-[13px] whitespace-nowrap mt-[2px]">
          <span className="w-[14px] h-[14px] border border-[#b94a4a] text-[#7a1c1c] text-[10px] flex items-center justify-center leading-none">五</span>
          <span>中</span>
          <Sv w={12} h={14}><path d="M9 0c2 6 0 13-9 13 5-1 8-6 9-13z" fill="#444" /></Sv>
          <span className="text-[10px] leading-none">°,</span>
          <Sv w={15} h={10}><rect x="0.500" y="0.500" width="14" height="9" fill="none" stroke="#555" /><path d="M2 3h11M2 6h11" stroke="#555" strokeDasharray="1 1" /></Sv>
          <Sv w={12} h={14}><circle cx="6" cy="4" r="3" fill="#555" /><path d="M0 14c0-5 3-6 6-6s6 1 6 6z" fill="#555" /></Sv>
          <Wrench size={12} fill="#555" />
        </div>
        <Eye size={17} className="shrink-0 ml-[9px]" />
        <Sv w={20} h={18} className="ml-[11px]"><path d="M7 1h6v5h6v6h-6v5H7v-5H1V6h6z" fill="none" stroke="#3f4a55" strokeWidth="1.500" /></Sv>
        <div className="ml-[3px]"><Caret c="#999" s={3} /></div>
        <div className="ml-[26px] w-[27px] h-[30px] bg-[#e5e7ea] flex items-center justify-center shrink-0"><Grid3x3 size={21} strokeWidth={1.6} /></div>
        <Columns2 size={20} strokeWidth={1.6} className="ml-[8px] shrink-0" />
        <Square size={20} strokeWidth={1.6} className="ml-[6px] shrink-0" />
      </div>
    </div>
  );
}

const BracketC = ({ bg, fg }) => (
  <Sv w={29} h={31}><rect width="29" height="31" rx="3" fill={bg} /><path d="M22 6H9L6 9v13l3 3h13" fill="none" stroke={fg} strokeWidth="4" /></Sv>
);

function Taskbar() {
  const Under = ({ w, ml, active, children }) => (
    <div style={{ width: w, marginLeft: ml }} className={"h-[50px] relative flex items-center justify-center shrink-0 border-b-[3px] border-[#77b9e9] " + (active ? "bg-[#5b5c50]" : "")}><div className="mt-[3px]">{children}</div></div>
  );
  return (
    <div className="h-[50px] bg-[#35382a] flex items-center relative shrink-0 text-[#e8e8e8]">
      <Sv w={20} h={22} className="absolute left-[20px] top-[16px]"><path d="M0 3l8-1v9H0zM10 2l10-2v11H10zM0 13h8v8l-8-1zM10 13h10v9l-10-2z" fill="#f4f4f4" /></Sv>
      <Under w={51} ml={69}><BracketC bg="#54b60f" fg="#eaf7d9" /></Under>
      <Under w={51} ml={11}><Sv w={30} h={28}><path d="M2 3l7 22 6-14 6 14 7-22" fill="none" stroke="#d9531f" strokeOpacity="0.8" strokeWidth="4" /></Sv></Under>
      <Under w={61} ml={6} active>
        <div className="w-[27px] h-[31px] flex flex-col rounded-[2px] overflow-hidden">
          <div className="flex-1 bg-[#d8174f] flex items-center justify-center text-white font-bold text-[15px] leading-none">A</div>
          <div className="h-[9px] bg-[#7c1230] flex items-center justify-center text-white text-[6px] font-bold leading-none">CAD</div>
        </div>
      </Under>
      <Under w={51} ml={6}><BracketC bg="#f5573f" fg="#fde0d8" /></Under>
      <div className="absolute left-[11px] top-[1px] flex items-center opacity-50 pointer-events-none">
        <div className="w-[37px] h-[38px] bg-[#7e8078] rounded-[7px]" />
        <span className="ml-[11px] text-[40px] leading-[40px] font-bold text-[#7e8078] font-['Liberation_Sans',sans-serif] whitespace-nowrap">tafe.vc</span>
      </div>
      <div className="ml-auto flex items-center">
        <ChevronUp size={22} strokeWidth={1.3} />
        <Mic size={22} strokeWidth={1.4} fill="#e8e8e8" className="ml-[8px]" />
        <Sv w={20} h={20} className="ml-[9px]"><path d="M10 0l10 3c0 9-3 14-10 17C3 17 0 12 0 3z" fill="#2c6fe0" /><path d="M4 7l6 5 6-5-6 8z" fill="#fff" /></Sv>
        <Monitor size={20} strokeWidth={1.2} className="ml-[10px]" />
        <Volume1 size={22} strokeWidth={1.2} className="ml-[8px]" />
        <span className="ml-[12px] text-[15px] font-['Liberation_Sans',sans-serif]">ENG</span>
        <MessageSquare size={21} strokeWidth={1.4} className="ml-[20px] mr-[30px]" />
      </div>
    </div>
  );
}

export default function App() {
  return (
    <div className="w-[1920px] h-[1080px] overflow-hidden flex flex-col font-['Noto_Sans','Noto_Sans_CJK_SC',sans-serif] bg-[#35382a]">
      <div className="h-[1030px] flex shrink-0">
        <div className="w-[1615px] shrink-0 bg-[#1f2532] flex flex-col border-t-[3px] border-[#0d6b8c]">
          <TitleBar />
          <MenuBar />
          <RibbonTabs />
          <Ribbon />
          <DocTabs />
          <div className="h-[5px] bg-[#3b4453] shrink-0" />
          <Canvas />
          <StatusBar />
        </div>
        <Wps />
      </div>
      <Taskbar />
    </div>
  );
}
